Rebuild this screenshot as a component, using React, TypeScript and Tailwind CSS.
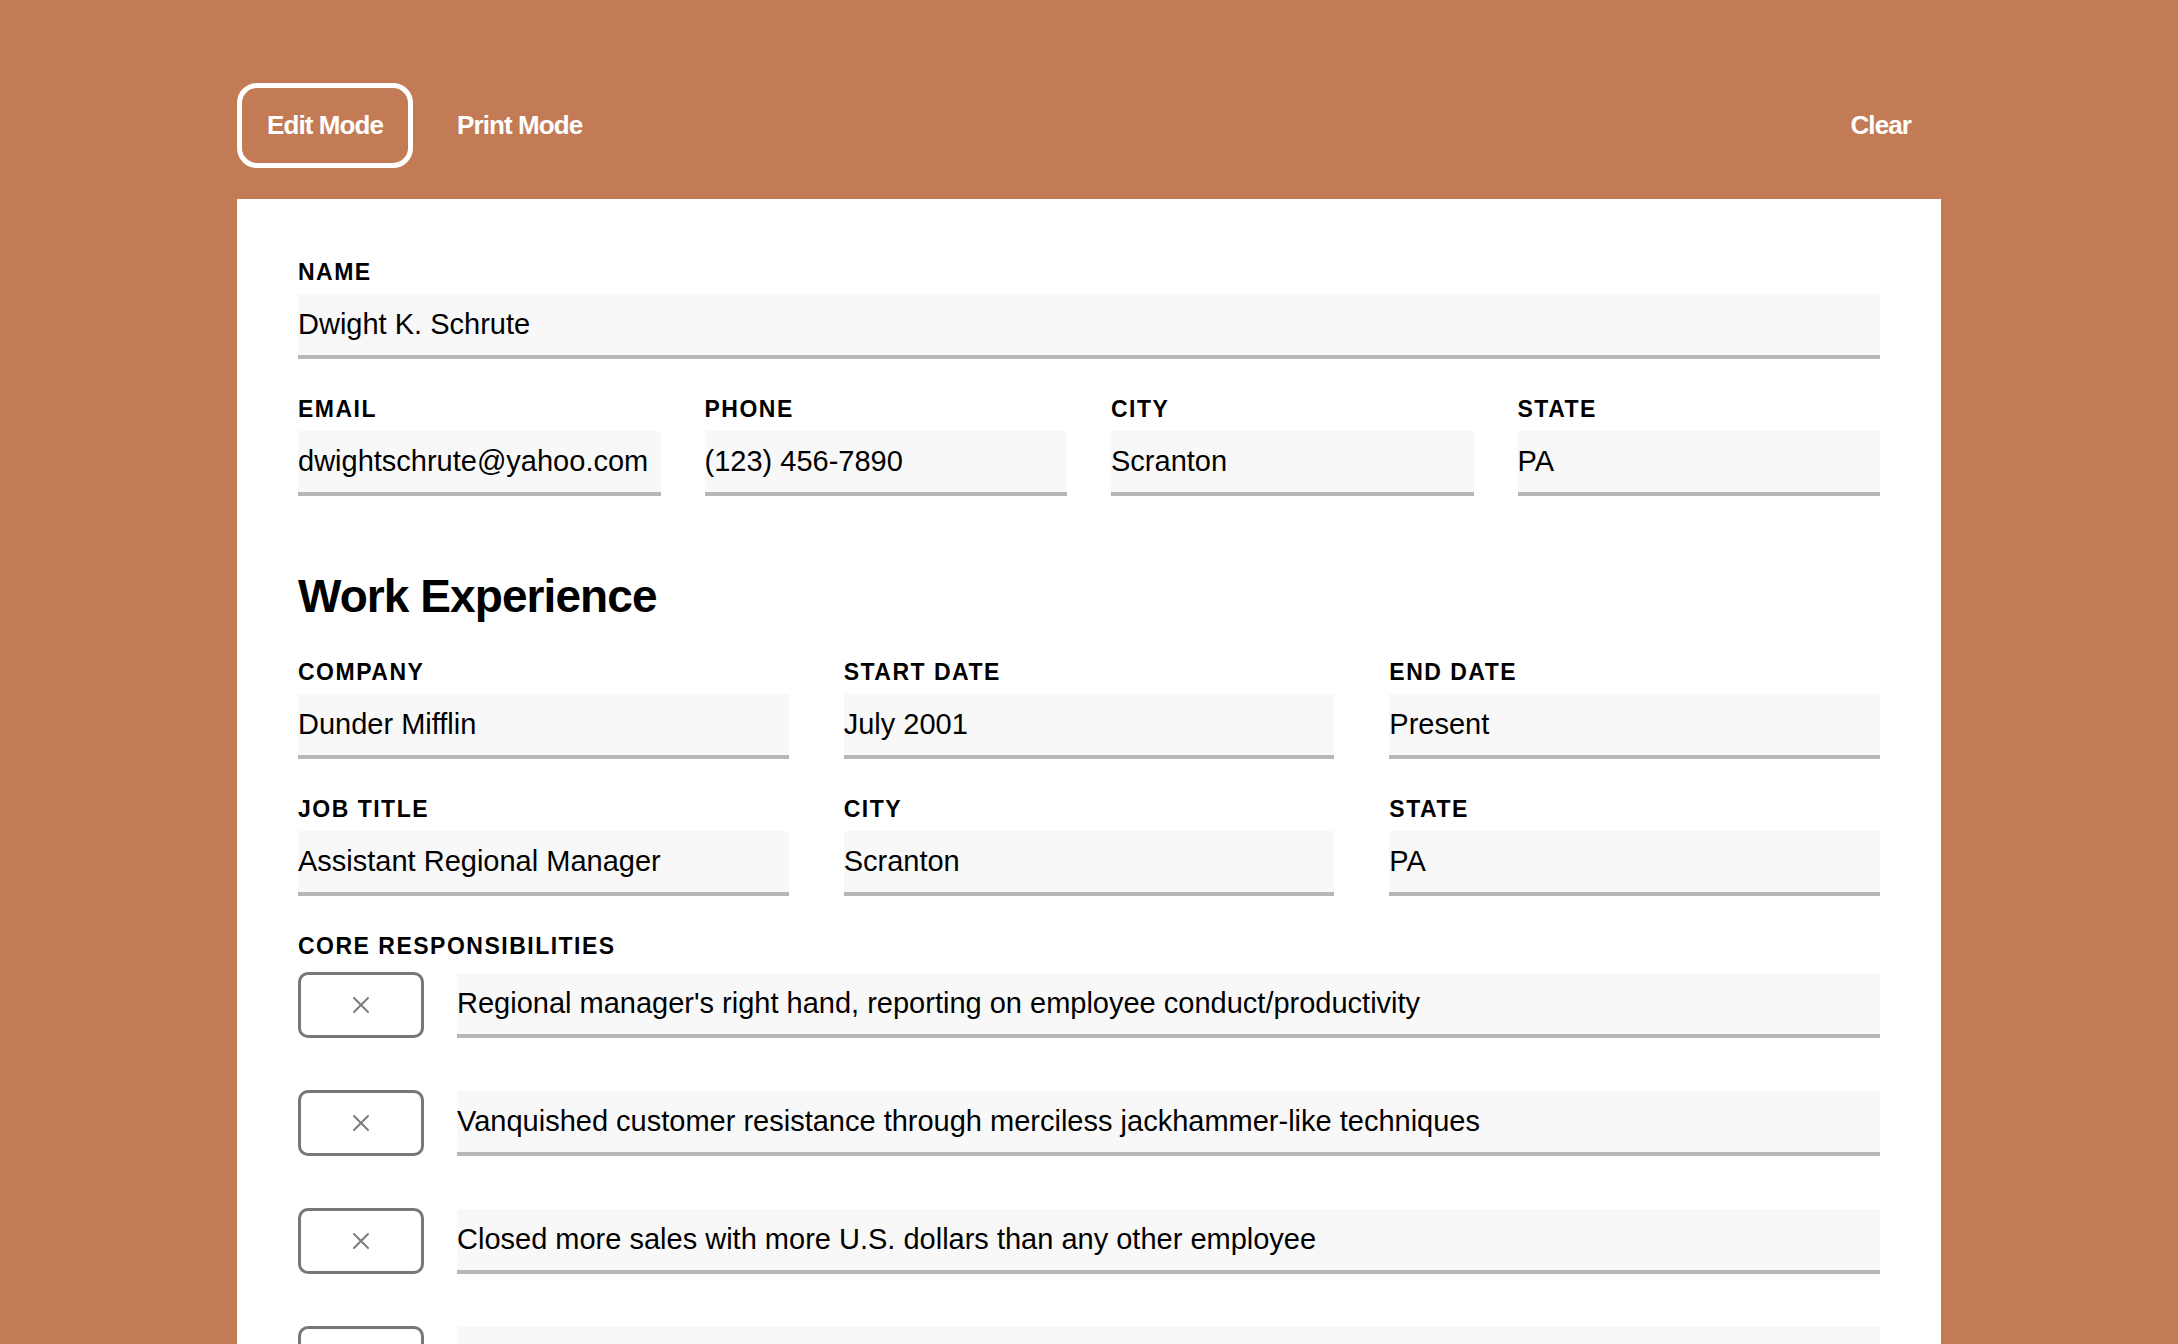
import { useState } from "react";

function Field({ label, value }: { label: string; value: string }) {
  return (
    <div className="flex flex-col">
      <label className="mb-[10px] text-[23px] leading-[23px] font-bold tracking-[0.065em] uppercase text-black">
        {label}
      </label>
      <input
        defaultValue={value}
        className="h-[65px] w-full border-b-4 border-[#b7b7b7] bg-[#f8f8f8] text-[29px] text-black outline-none"
      />
    </div>
  );
}

function RemoveButton() {
  return (
    <button className="flex h-[66px] w-[126px] shrink-0 items-center justify-center rounded-[10px] border-[3px] border-[#777] bg-white">
      <svg width="18" height="18" viewBox="0 0 18 18" fill="none">
        <path d="M2 2l14 14M16 2L2 16" stroke="#7d7d7d" strokeWidth="2" strokeLinecap="round" />
      </svg>
    </button>
  );
}

export default function App() {
  const [mode, setMode] = useState<"edit" | "print">("edit");
  const responsibilities = [
    "Regional manager's right hand, reporting on employee conduct/productivity",
    "Vanquished customer resistance through merciless jackhammer-like techniques",
    "Closed more sales with more U.S. dollars than any other employee",
    "",
  ];

  return (
    <div className="min-h-screen bg-[#c27b55] font-['Liberation_Sans',Arial,sans-serif]">
      <div className="mx-auto w-[1704px] pt-[83px]">
        {/* Barra superior */}
        <div className="mb-[31px] flex items-center justify-between">
          <div className="flex gap-[14px]">
            <button
              onClick={() => setMode("edit")}
              className={`h-[85px] rounded-[20px] border-[5px] px-[25px] text-[26px] font-bold tracking-[-0.035em] text-white ${
                mode === "edit" ? "border-white" : "border-transparent"
              }`}
            >
              Edit Mode
            </button>
            <button
              onClick={() => setMode("print")}
              className={`h-[85px] rounded-[20px] border-[5px] px-[25px] text-[26px] font-bold tracking-[-0.035em] text-white ${
                mode === "print" ? "border-white" : "border-transparent"
              }`}
            >
              Print Mode
            </button>
          </div>
          <button className="h-[85px] rounded-[20px] border-[5px] border-transparent px-[25px] text-[26px] font-bold tracking-[-0.035em] text-white">
            Clear
          </button>
        </div>

        {/* Folha */}
        <div className="bg-white px-[61px] pt-[62px] pb-[80px]">
          <Field label="Name" value="Dwight K. Schrute" />

          <div className="mt-[39px] grid grid-cols-4 gap-x-[44px]">
            <Field label="Email" value="dwightschrute@yahoo.com" />
            <Field label="Phone" value="(123) 456-7890" />
            <Field label="City" value="Scranton" />
            <Field label="State" value="PA" />
          </div>

          <h2 className="mt-[77px] text-[46px] leading-[46px] font-bold tracking-[-0.02em] text-black">
            Work Experience
          </h2>

          <div className="mt-[42px] grid grid-cols-3 gap-x-[55px] gap-y-[39px]">
            <Field label="Company" value="Dunder Mifflin" />
            <Field label="Start Date" value="July 2001" />
            <Field label="End Date" value="Present" />
            <Field label="Job Title" value="Assistant Regional Manager" />
            <Field label="City" value="Scranton" />
            <Field label="State" value="PA" />
          </div>

          <div className="mt-[39px] text-[23px] leading-[23px] font-bold tracking-[0.065em] uppercase text-black">
            Core Responsibilities
          </div>
          <div className="mt-[14px] flex flex-col gap-[52px]">
            {responsibilities.map((item, i) => (
              <div key={i} className="flex items-start gap-[33px]">
                <RemoveButton />
                <input
                  defaultValue={item}
                  className="mt-[1px] h-[65px] flex-1 border-b-4 border-[#b7b7b7] bg-[#f8f8f8] text-[29px] text-black outline-none"
                />
              </div>
            ))}
          </div>
        </div>
      </div>
    </div>
  );
}
